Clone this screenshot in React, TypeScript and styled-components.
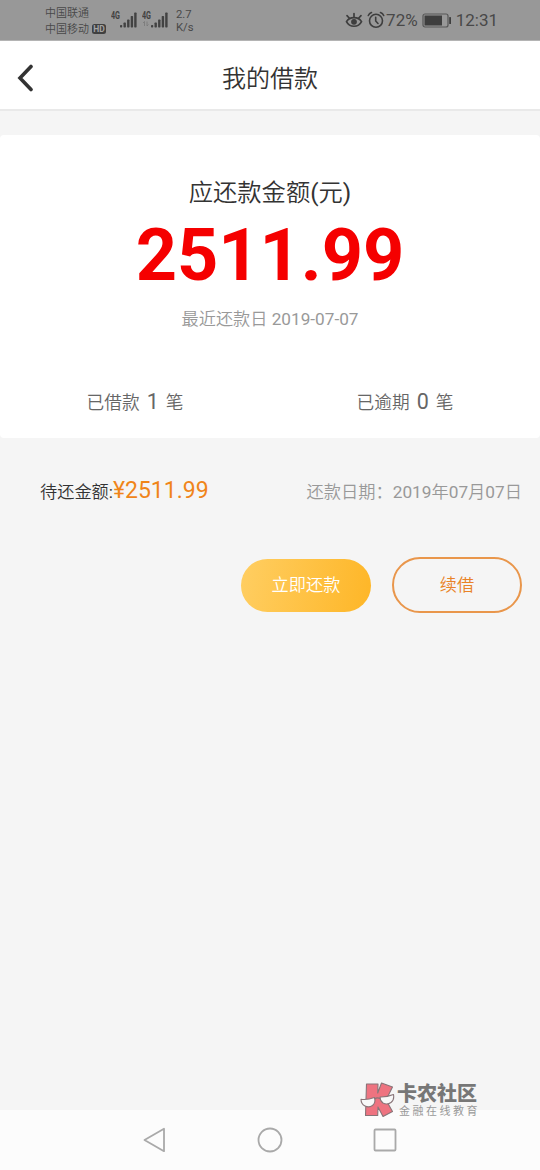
import React from 'react';
import styled, { createGlobalStyle } from 'styled-components';

const GlobalStyle = createGlobalStyle`
  * { box-sizing: border-box; }
  body {
    margin: 0;
    background: #f5f5f5;
    font-family: Roboto, "Noto Sans CJK SC DemiLight", "Noto Sans CJK SC", sans-serif;
    color: #333;
  }
`;

const Screen = styled.div`
  position: relative;
  width: 540px;
  height: 1170px;
  display: flex;
  flex-direction: column;
  background: #f5f5f5;
  overflow: hidden;
  white-space: nowrap;
`;

const StatusBar = styled.header`
  height: 41px;
  flex: none;
  display: flex;
  justify-content: space-between;
  padding: 0 42px 0 45px;
  background: #989898;
  border-bottom: 1px solid #b4b4b4;
  color: #484848;
`;

const StatusGroup = styled.div`
  display: flex;
  align-items: center;
`;

const Carriers = styled.div`
  display: flex;
  flex-direction: column;
  width: 66px;
  padding-top: 3px;
  font-size: 11px;
  line-height: 16px;
`;

const CarrierLine = styled.div`
  display: flex;
  align-items: center;
`;

const HdBadge = styled.span`
  width: 14px;
  height: 10px;
  margin-left: 3px;
  margin-top: -1px;
  border-radius: 2.5px;
  background: #404040;
  color: #a4a4a4;
  font-size: 8.5px;
  font-weight: 700;
  line-height: 10px;
  text-align: center;
`;

const SignalIcon = styled.svg`
  width: 30.5px;
  height: 20px;
`;

const Speed = styled.div`
  margin-left: 4px;
  padding-top: 2px;
  font-size: 11.3px;
  line-height: 13.5px;
`;

const StatusText = styled.span<{ $gap?: number }>`
  font-size: 17px;
  line-height: 20px;
  margin-left: ${({ $gap = 0 }) => $gap}px;
`;

const TitleBar = styled.nav`
  height: 70px;
  flex: none;
  display: grid;
  grid-template-columns: 60px 1fr 60px;
  align-items: center;
  padding-top: 6px;
  background: #fff;
  border-bottom: 2px solid #e9e9e9;
`;

const BackButton = styled.button`
  display: flex;
  padding: 0 0 0 17px;
  border: 0;
  background: none;
`;

const Title = styled.h1`
  margin: 0;
  padding-top: 1px;
  text-align: center;
  font-size: 24px;
  font-weight: 400;
  line-height: 32px;
`;

const SummaryCard = styled.section`
  height: 303px;
  flex: none;
  margin-top: 24px;
  padding-top: 41px;
  border-radius: 4px;
  background: #fff;
  text-align: center;
`;

const SummaryLabel = styled.div`
  font-size: 24.3px;
  line-height: 34px;
`;

const SummaryAmount = styled.div`
  margin-top: 4px;
  font-size: 72px;
  font-weight: 700;
  line-height: 84px;
  color: #f50000;
`;

const DueDate = styled.div`
  margin-top: 9px;
  font-size: 17.2px;
  line-height: 24px;
  color: #999;
`;

const Stats = styled.div`
  display: grid;
  grid-template-columns: 1fr 1fr;
  margin-top: 56px;
`;

const Stat = styled.div`
  display: flex;
  justify-content: center;
  align-items: baseline;
  gap: 7px;
  font-size: 17.7px;
  line-height: 30px;
  color: #666;
`;

const StatValue = styled.span`
  font-size: 21.5px;
`;

const LoanItem = styled.section`
  flex: 1;
  padding: 36px 18px 0 40px;
`;

const LoanRow = styled.div`
  display: flex;
  justify-content: space-between;
  align-items: baseline;
  line-height: 34px;
`;

const Outstanding = styled.div`
  font-size: 17.2px;
  color: #333;
`;

const OutstandingValue = styled.span`
  font-size: 23px;
  color: #f08519;
`;

const RepayDate = styled.div`
  font-size: 17.25px;
  color: #999;
`;

const Actions = styled.div`
  display: flex;
  justify-content: flex-end;
  align-items: center;
  gap: 21px;
  margin-top: 48px;
`;

const PillButton = styled.button<{ $outlined?: boolean }>`
  width: 130px;
  height: ${({ $outlined }) => ($outlined ? 56 : 53)}px;
  padding: 0 0 3px;
  border: ${({ $outlined }) => ($outlined ? '2px solid #e9964b' : '0')};
  border-radius: 28px;
  background: ${({ $outlined }) => ($outlined ? 'transparent' : 'linear-gradient(100deg, #ffce62, #feb627)')};
  color: ${({ $outlined }) => ($outlined ? '#e98327' : '#fff')};
  font-family: inherit;
  font-size: 17.2px;
`;

const SystemNav = styled.footer`
  height: 60px;
  flex: none;
  display: flex;
  justify-content: space-between;
  align-items: center;
  padding: 0 143px 0 142px;
  background: #fcfcfc;
`;

const Watermark = styled.div`
  position: absolute;
  left: 359px;
  top: 1081px;
  display: flex;
  gap: 2px;
`;

const WatermarkText = styled.div`
  display: flex;
  flex-direction: column;
  padding-top: 2px;
  font-family: Roboto, "Noto Sans CJK SC", sans-serif;
`;

const WatermarkName = styled.span`
  font-size: 20px;
  font-weight: 900;
  line-height: 23px;
  color: #777;
`;

const WatermarkTag = styled.span`
  margin-left: 2px;
  font-size: 11px;
  letter-spacing: 2.5px;
  line-height: 12px;
  color: #999;
`;

function Signal({ data }: { data?: boolean }) {
  return (
    <SignalIcon viewBox="0 0 30.5 20" fill="#424242">
      <text x="0" y="9" fontSize="10" fontWeight="700" fontFamily="Roboto" textLength="9" lengthAdjust="spacingAndGlyphs">4G</text>
      {data && <path d="M2.500 16v-4.500l-1.500 1.500M5 11.500v4.500l1.500-1.500" fill="none" stroke="#777" strokeWidth=".8" />}
      <rect x="9" y="15" width="2.200" height="2.500" rx=".7" />
      <rect x="12.500" y="12.500" width="2.400" height="5" rx=".7" />
      <rect x="16.100" y="9.500" width="2.400" height="8" rx=".7" />
      <rect x="19.700" y="6" width="2.400" height="11.500" rx=".7" />
      <rect x="23.200" y="2.500" width="2.400" height="15" rx=".7" />
    </SignalIcon>
  );
}

function EyeIcon() {
  return (
    <svg width="18" height="18" viewBox="0 0 18 18" fill="none" stroke="#3e3e3e" strokeWidth="1.700" strokeLinecap="round">
      <path d="M1.500 10.600C4.500 5.200 13.500 5.200 16.500 10.600C13.500 16.800 4.500 16.800 1.500 10.600Z" />
      <path d="M9 6V2.500M4.200 7L2 4.600M13.800 7L16 4.600" />
      <circle cx="9" cy="10.800" r="2.900" fill="#3e3e3e" stroke="none" />
    </svg>
  );
}

function AlarmIcon() {
  return (
    <svg width="18" height="18" viewBox="0 0 18 18" fill="none" stroke="#3e3e3e" strokeWidth="1.600" strokeLinecap="round">
      <circle cx="9" cy="9.800" r="6.500" />
      <path d="M1.300 4.500Q2.300 2.300 4.500 1.500M16.700 4.500Q15.700 2.300 13.500 1.500M8.700 6.300V10L11 12.500" />
    </svg>
  );
}

const IconGap = styled.span`
  width: 4px;
`;

const Battery = styled.svg`
  margin-left: 4px;
`;

function LogoMark() {
  return (
    <svg width="36" height="38" viewBox="0 0 36 38" stroke="#887478" strokeWidth="1.100" strokeLinejoin="round">
      <path fill="#ee7380" d="M7.500 3H19L18.700 12L22.500 2L33.500 6L27 19L33.500 30.500L24 35.500L19 26L18.700 34.500H6.500Z" />
      <g fill="#f8f8f8">
        <path d="M2 18.300Q8 19.300 15.500 16.500Q17 21.500 13.500 24.500Q10 27 6 25Q2 23 2 18.300Z" />
        <path d="M21 16Q27.500 16.300 34.500 13.500Q35.500 19 32 21.500Q28 24.300 24 22Q21 20 21 16Z" />
      </g>
      <path d="M15.500 18Q18 16 21 17.500" fill="none" />
    </svg>
  );
}

export default function App() {
  return (
    <>
      <GlobalStyle />
      <Screen>
        <StatusBar>
          <StatusGroup>
            <Carriers>
              <CarrierLine>中国联通</CarrierLine>
              <CarrierLine>中国移动<HdBadge>HD</HdBadge></CarrierLine>
            </Carriers>
            <Signal />
            <Signal data />
            <Speed>2.7<br />K/s</Speed>
          </StatusGroup>
          <StatusGroup>
            <EyeIcon />
            <IconGap />
            <AlarmIcon />
            <StatusText $gap={1}>72%</StatusText>
            <Battery width="30" height="15" viewBox="0 0 30 15">
              <rect x="1" y="1" width="25" height="13" rx="2" fill="none" stroke="#565656" strokeWidth="1.200" />
              <rect x="2.500" y="2.500" width="17.500" height="10" fill="#3e3e3e" />
              <rect x="27.200" y="4" width="1.800" height="7" rx=".6" fill="#3e3e3e" />
            </Battery>
            <StatusText $gap={4}>12:31</StatusText>
          </StatusGroup>
        </StatusBar>

        <TitleBar>
          <BackButton aria-label="返回">
            <svg width="17" height="28" viewBox="0 0 17 28" fill="none" stroke="#333" strokeWidth="3.600" strokeLinecap="round" strokeLinejoin="miter">
              <path d="M14 2.500L3 14L14 25.500" />
            </svg>
          </BackButton>
          <Title>我的借款</Title>
        </TitleBar>

        <SummaryCard>
          <SummaryLabel>应还款金额(元)</SummaryLabel>
          <SummaryAmount>2511.99</SummaryAmount>
          <DueDate>最近还款日 2019-07-07</DueDate>
          <Stats>
            <Stat>已借款<StatValue>1</StatValue>笔</Stat>
            <Stat>已逾期<StatValue>0</StatValue>笔</Stat>
          </Stats>
        </SummaryCard>

        <LoanItem>
          <LoanRow>
            <Outstanding>待还金额:<OutstandingValue>¥2511.99</OutstandingValue></Outstanding>
            <RepayDate>还款日期：2019年07月07日</RepayDate>
          </LoanRow>
          <Actions>
            <PillButton>立即还款</PillButton>
            <PillButton $outlined>续借</PillButton>
          </Actions>
        </LoanItem>

        <SystemNav>
          <svg width="24" height="26" viewBox="0 0 24 26" fill="none" stroke="#a9a9a9" strokeWidth="1.800" strokeLinejoin="round">
            <path d="M2.500 13L22 1.800V24.200Z" />
          </svg>
          <svg width="26" height="26" viewBox="0 0 26 26" fill="none" stroke="#a9a9a9" strokeWidth="1.800">
            <circle cx="13" cy="13" r="11.500" />
          </svg>
          <svg width="24" height="24" viewBox="0 0 24 24" fill="none" stroke="#a9a9a9" strokeWidth="1.800">
            <rect x="1.500" y="1.500" width="21" height="21" rx="1" />
          </svg>
        </SystemNav>

        <Watermark>
          <LogoMark />
          <WatermarkText>
            <WatermarkName>卡农社区</WatermarkName>
            <WatermarkTag>金融在线教育</WatermarkTag>
          </WatermarkText>
        </Watermark>
      </Screen>
    </>
  );
}
